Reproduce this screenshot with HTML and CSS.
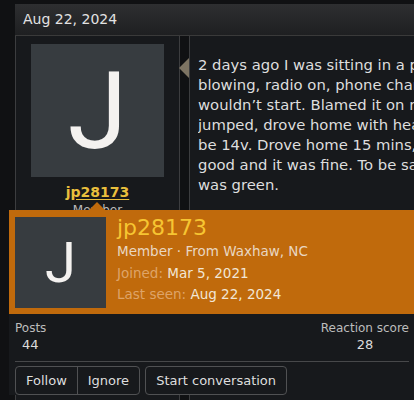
FILE: index.html
```
<!DOCTYPE html>
<html lang="en">
<head>
    <meta charset="UTF-8">
    <meta name="viewport" content="width=device-width, initial-scale=1.0">
    <title>Thread</title>
    <link rel="stylesheet" href="styles.css">
</head>
<body>
    <div class="thread">
        <div class="date-bar">Aug 22, 2024</div>

        <div class="message">
            <!-- Autor -->
            <div class="user-cell">
                <div class="avatar big">J</div>
                <a class="username" href="#">jp28173</a>
                <div class="user-title">Member</div>
            </div>

            <!-- Conteudo -->
            <div class="message-cell">
                <span class="arrow"></span>
                <p class="message-text">2 days ago I was sitting in a parking lot with the AC<br>blowing, radio on, phone charging. When I left it<br>wouldn’t start. Blamed it on my phone charger, got it<br>jumped, drove home with headlights on. Voltage should<br>be 14v. Drove home 15 mins, then tested the battery,<br>good and it was fine. To be safe I checked the eye, it<br>was green.</p>
            </div>
        </div>
    </div>

    <!-- Cartao do membro -->
    <div class="member-card">
        <span class="card-arrow"></span>
        <div class="card-head">
            <div class="avatar small">J</div>
            <div class="card-info">
                <div class="card-name">jp28173</div>
                <div class="card-line first">Member · From Waxhaw, NC</div>
                <div class="card-line"><span class="label">Joined:</span> Mar 5, 2021</div>
                <div class="card-line"><span class="label">Last seen:</span> Aug 22, 2024</div>
            </div>
        </div>
        <div class="card-body">
            <div class="stats">
                <div class="stat">
                    <div class="stat-label">Posts</div>
                    <div class="stat-value">44</div>
                </div>
                <div class="stat right">
                    <div class="stat-label">Reaction score</div>
                    <div class="stat-value">28</div>
                </div>
            </div>
            <div class="buttons">
                <div class="btn-group">
                    <button class="btn">Follow</button>
                    <button class="btn">Ignore</button>
                </div>
                <button class="btn single">Start conversation</button>
            </div>
        </div>
    </div>
</body>
</html>
```
FILE: styles.css
```
body {
    margin: 0;
    font-family: "DejaVu Sans", Verdana, sans-serif;
    background: #101113;
    color: #dcdcdc;
    overflow: hidden;
    height: 400px;
    position: relative;
}

.thread {
    padding: 4px 0 0 15px;
}

.date-bar {
    height: 31px;
    line-height: 31px;
    padding-left: 8px;
    font-size: 14px;
    color: #e2e2e2;
    background: linear-gradient(#2e2f31, #1e1f21);
    border-bottom: 1px solid #3a3a3a;
    white-space: nowrap;
}

.message {
    display: flex;
    gap: 9px;
    height: 400px;
}

.user-cell {
    width: 163px;
    flex-shrink: 0;
    background: #17191c;
    border: 1px solid #3c3d3f;
    border-top: none;
    display: flex;
    flex-direction: column;
    align-items: center;
    padding-top: 8px;
}

.avatar {
    background: #373c40;
    color: #f4f2f0;
    font-family: Roboto, "DejaVu Sans", sans-serif;
    display: flex;
    align-items: center;
    justify-content: center;
    flex-shrink: 0;
    line-height: 1;
}

.avatar.big {
    width: 133px;
    height: 133px;
    font-size: 108px;
}

.username {
    margin-top: 7px;
    font-size: 14px;
    font-weight: bold;
    color: #e9bf3c;
    text-decoration: underline;
    text-underline-offset: 2px;
}

.user-title {
    font-size: 12px;
    color: #bbb;
    margin-top: 3px;
}

.message-cell {
    flex: 1;
    position: relative;
    background: #17191c;
    border: 1px solid #3c3d3f;
    border-top: none;
    border-right: none;
    padding: 19px 0 0 8px;
    min-width: 0;
}

/* setinha apontando pro autor */
.arrow {
    position: absolute;
    left: -11px;
    top: 22px;
    border-top: 10px solid transparent;
    border-bottom: 10px solid transparent;
    border-right: 10px solid #7d7463;
}

.message-text {
    margin: 0;
    white-space: nowrap;
    overflow: hidden;
    font-size: 14.8px;
    line-height: 20px;
    color: #dedede;
}

.member-card {
    position: absolute;
    left: 9px;
    top: 210px;
    width: 420px;
}

.card-arrow {
    position: absolute;
    left: 80px;
    top: -8px;
    border-left: 8px solid transparent;
    border-right: 8px solid transparent;
    border-bottom: 8px solid #c06a0c;
}

.card-head {
    background: #c06a0c;
    display: flex;
    align-items: flex-start;
    gap: 11px;
    padding: 7px 6px 6px 6px;
}

.avatar.small {
    width: 91px;
    height: 91px;
    font-size: 56px;
}

.card-info {
    display: flex;
    flex-direction: column;
    margin-top: -2px;
}

.card-name {
    font-size: 22px;
    color: #f6c532;
    line-height: 26px;
}

.card-line {
    font-size: 13.5px;
    line-height: 21.5px;
    color: #f2e6d6;
}

.card-line.first {
    color: #e9d7c2;
}

.label {
    color: #dea468;
}

.card-body {
    background: #17191c;
    padding: 6px 11px 0 6px;
}

.stats {
    display: flex;
    justify-content: space-between;
    padding-bottom: 7px;
    border-bottom: 1px solid #47484a;
    width: 394px;
}

.stat-label {
    font-size: 12px;
    color: #bdbdbd;
    line-height: 16px;
}

.stat-value {
    font-size: 13px;
    color: #dcdcdc;
    line-height: 18px;
    padding-left: 7px;
}

.stat.right {
    text-align: center;
}

.stat.right .stat-value {
    padding-left: 0;
}

.buttons {
    display: flex;
    gap: 5px;
    margin-top: 4px;
}

.btn-group {
    display: flex;
    border: 1px solid #505153;
    border-radius: 4px;
}

.btn {
    font-family: inherit;
    font-size: 13px;
    color: #dedede;
    background: transparent;
    border: none;
    padding: 0 10px;
    height: 27px;
}

.btn-group .btn + .btn {
    border-left: 1px solid #505153;
}

.btn.single {
    border: 1px solid #505153;
    border-radius: 4px;
    height: 29px;
}
```
